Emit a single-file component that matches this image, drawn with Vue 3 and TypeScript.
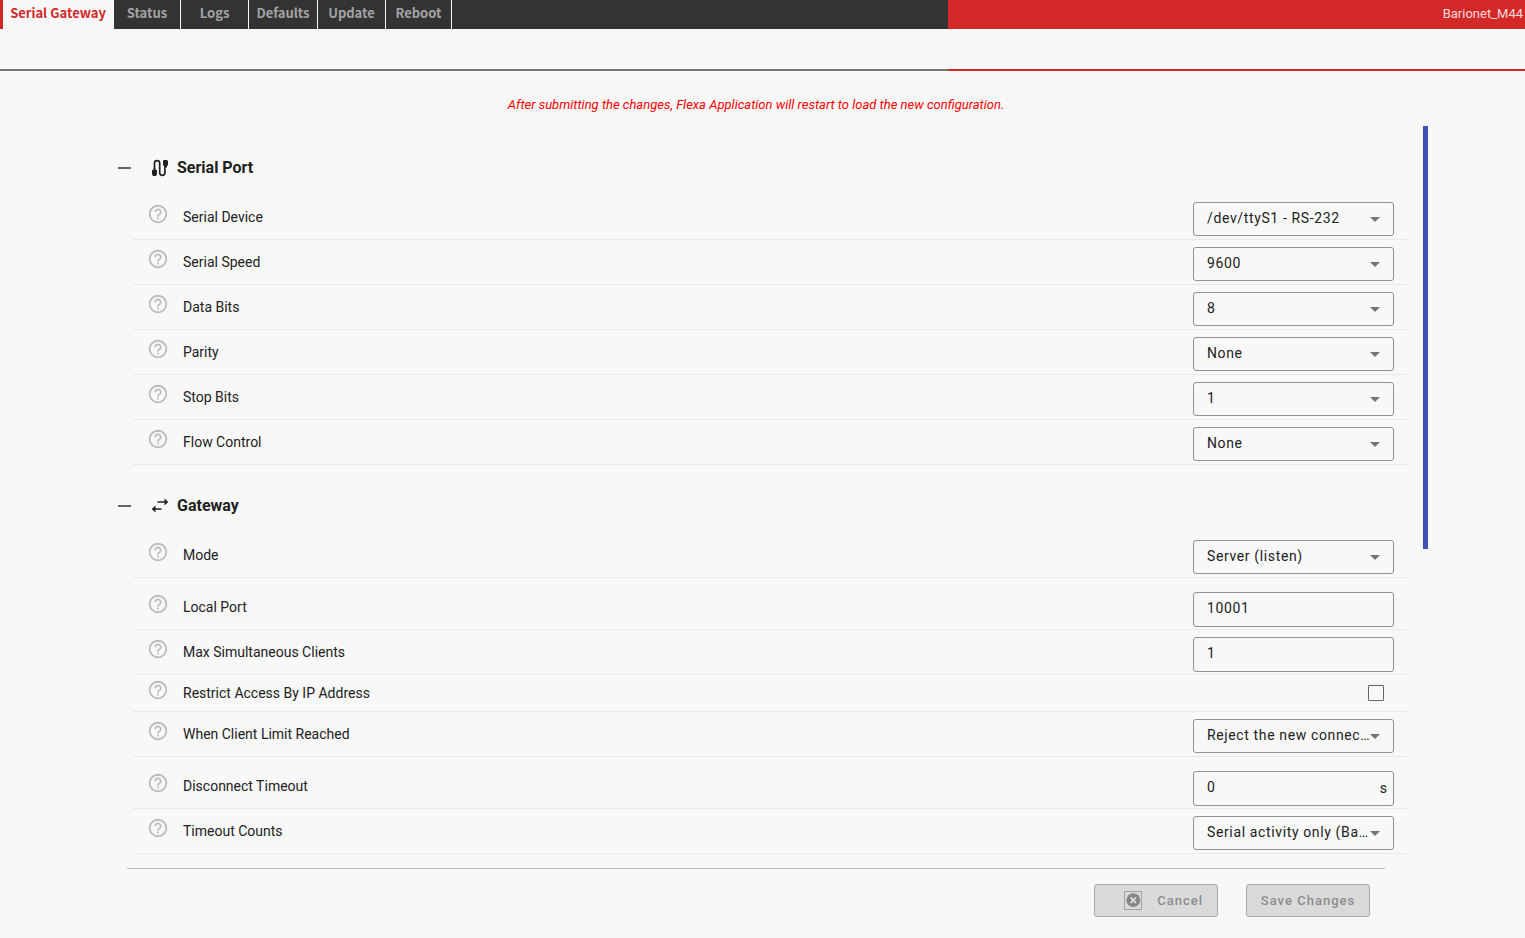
<script setup lang="ts">
import { ref } from 'vue'

type Kind = 'select' | 'text' | 'check'

interface Field {
  id: string
  label: string
  kind: Kind
  value: string
  unit?: string
  spaced?: boolean
}

interface Section {
  id: string
  title: string
  fields: Field[]
}

const tabs: string[] = ['Serial Gateway', 'Status', 'Logs', 'Defaults', 'Update', 'Reboot']
const activeTab = ref('Serial Gateway')

const sections = ref<Section[]>([
  {
    id: 'serial',
    title: 'Serial Port',
    fields: [
      { id: 'device', label: 'Serial Device', kind: 'select', value: '/dev/ttyS1 - RS-232' },
      { id: 'speed', label: 'Serial Speed', kind: 'select', value: '9600' },
      { id: 'data-bits', label: 'Data Bits', kind: 'select', value: '8' },
      { id: 'parity', label: 'Parity', kind: 'select', value: 'None' },
      { id: 'stop-bits', label: 'Stop Bits', kind: 'select', value: '1' },
      { id: 'flow', label: 'Flow Control', kind: 'select', value: 'None' },
    ],
  },
  {
    id: 'gateway',
    title: 'Gateway',
    fields: [
      { id: 'mode', label: 'Mode', kind: 'select', value: 'Server (listen)' },
      { id: 'port', label: 'Local Port', kind: 'text', value: '10001', spaced: true },
      { id: 'clients', label: 'Max Simultaneous Clients', kind: 'text', value: '1' },
      { id: 'restrict', label: 'Restrict Access By IP Address', kind: 'check', value: '' },
      { id: 'limit', label: 'When Client Limit Reached', kind: 'select', value: 'Reject the new connection' },
      { id: 'timeout', label: 'Disconnect Timeout', kind: 'text', value: '0', unit: 's', spaced: true },
      { id: 'counts', label: 'Timeout Counts', kind: 'select', value: 'Serial activity only (Barionet)' },
    ],
  },
])
</script>

<template>
  <div class="page">
    <header class="top">
      <nav class="tabs">
        <a
          v-for="tab in tabs"
          :key="tab"
          href="#"
          class="tab"
          :class="{ active: tab === activeTab }"
          @click.prevent="activeTab = tab"
        >{{ tab }}</a>
      </nav>
      <div class="device">Barionet_M44</div>
    </header>
    <div class="subbar">
      <div class="sub-left"></div>
      <div class="sub-right"></div>
    </div>

    <main class="main">
      <p class="notice">After submitting the changes, Flexa Application will restart to load the new configuration.</p>

      <div class="scroller">
        <form class="form" @submit.prevent>
          <section v-for="section in sections" :key="section.id">
            <div class="heading">
              <button type="button" class="collapse" :aria-label="'Collapse ' + section.title">
                <svg width="13" height="2" viewBox="0 0 13 2"><path d="M0 1h13" stroke="#666" stroke-width="2" /></svg>
              </button>
              <svg v-if="section.id === 'serial'" class="heading-icon" width="18" height="18" viewBox="0 0 18 18">
                <path d="M3.500 12V4.200a2.600 2.600 0 0 1 5.200 0v9.600a2.600 2.600 0 0 0 5.200 0V6" fill="none" stroke="#212121" stroke-width="1.700" />
                <path d="M2.500 9.500h2V11H6v4l-1 2H2l-1-2v-4h1.500zM12.500 1h3.500l1 1v4l-1 1v1.500h-3V7l-1-1V2z" fill="#212121" />
              </svg>
              <svg v-else class="heading-icon" width="18" height="18" viewBox="0 0 18 18">
                <path d="M6.500 5h8M3.500 12h7" fill="none" stroke="#212121" stroke-width="1.700" />
                <path d="M13.500 1.500L17.300 5l-3.800 3.500zM4.500 8.500v7L.700 12z" fill="#212121" />
              </svg>
              <h2 class="title">{{ section.title }}</h2>
            </div>

            <div
              v-for="field in section.fields"
              :key="field.id"
              class="row"
              :class="{ spaced: field.spaced, compact: field.kind === 'check' }"
            >
              <button type="button" class="help" :aria-label="'Help: ' + field.label">
                <svg width="22" height="22" viewBox="0 0 24 24">
                  <path fill="#bdbdbd" d="M11 18h2v-2h-2v2zm1-16C6.480 2 2 6.480 2 12s4.480 10 10 10 10-4.480 10-10S17.520 2 12 2zm0 18c-4.410 0-8-3.590-8-8s3.590-8 8-8 8 3.590 8 8-3.590 8-8 8zm0-14c-2.210 0-4 1.790-4 4h2c0-1.100.900-2 2-2s2 .900 2 2c0 2-3 1.750-3 5h2c0-2.250 3-2.500 3-5 0-2.210-1.790-4-4-4z" />
                </svg>
              </button>
              <label class="label" :for="field.id">{{ field.label }}</label>
              <div v-if="field.kind === 'select'" class="control">
                <select :id="field.id" v-model="field.value" class="box select">
                  <option>{{ field.value }}</option>
                </select>
                <svg class="arrow" width="10" height="5" viewBox="0 0 10 5"><path d="M0 0h10L5 5z" fill="#757575" /></svg>
              </div>
              <div v-else-if="field.kind === 'text'" class="control">
                <input :id="field.id" v-model="field.value" type="text" class="box" />
                <span v-if="field.unit" class="unit">{{ field.unit }}</span>
              </div>
              <input v-else :id="field.id" type="checkbox" class="check" />
            </div>
          </section>
        </form>
        <div class="thumb"></div>
      </div>

      <footer class="footer">
        <button type="button" class="action cancel" disabled>
          <svg class="cancel-icon" width="18" height="19" viewBox="0 0 18 19">
            <rect x=".5" y=".5" width="17" height="18" fill="none" stroke="#a3a3a3" />
            <circle cx="9.300" cy="9.200" r="6.900" fill="#868686" />
            <path d="M6.500 6.400l5.600 5.600M12.100 6.400L6.500 12" stroke="#dadada" stroke-width="1.800" />
          </svg>
          <span>Cancel</span>
        </button>
        <button type="submit" class="action" disabled>Save Changes</button>
      </footer>
    </main>
  </div>
</template>

<style>
html,
body {
  margin: 0;
  background: #f8f8f8;
}
</style>

<style scoped>
.page {
  min-height: 100vh;
  box-sizing: border-box;
  background: #f8f8f8;
  color: #212121;
  font-family: Roboto, sans-serif;
  font-size: 14px;
}

.top,
.subbar {
  display: grid;
  grid-template-columns: 23fr 14fr;
}

.top {
  height: 29px;
}

.tabs {
  display: grid;
  grid-template-columns: 114px 67px 68px 69px 68px 66px;
  background: #333;
}

.tab {
  box-sizing: border-box;
  border-right: 1px solid #f8f8f8;
  color: #a3a3a3;
  font-family: "Noto Sans CJK SC", "Open Sans", sans-serif;
  font-size: 13px;
  font-weight: 700;
  line-height: 26px;
  text-align: center;
  text-decoration: none;
  white-space: nowrap;
}

.tab.active {
  border-left: 3px solid #d32828;
  background: #f8f8f8;
  color: #d32828;
}

.device {
  padding-right: 2px;
  background: #d32828;
  color: #fbdcdc;
  font-size: 13px;
  line-height: 28px;
  text-align: right;
}

.subbar {
  height: 42px;
}

.sub-left {
  border-bottom: 2px solid #757575;
}

.sub-right {
  border-bottom: 2px solid #d32828;
}

.main {
  padding: 0 97px;
}

.notice {
  margin: 0;
  padding: 24px 13px 12px 0;
  color: #f00;
  font-size: 13px;
  font-style: italic;
  line-height: 19px;
  text-align: center;
}

.scroller {
  display: flex;
}

.form {
  flex: 1;
  min-width: 0;
  padding: 1px 15px 0 0;
}

.thumb {
  width: 5px;
  height: 423px;
  background: #3f51b5;
}

.heading {
  display: flex;
  align-items: center;
  height: 54px;
  padding: 14px 0 0 21px;
}

.collapse,
.help {
  display: flex;
  padding: 0;
  border: 0;
  background: none;
}

.heading-icon {
  margin: 0 8px 0 20px;
}

.title {
  margin: 0;
  font-size: 16px;
  font-weight: 700;
  line-height: 20px;
}

.row {
  display: flex;
  align-items: flex-start;
  margin-left: 36px;
  padding: 7px 14px 2px 14px;
  border-bottom: 1px solid #e8e8e8;
}

.row.spaced {
  padding-top: 14px;
}

.row.compact {
  padding-top: 3px;
  padding-bottom: 0;
}

.help {
  margin: 1px 14px 0 0;
}

.label {
  flex: 1;
  padding-top: 6px;
  line-height: 18px;
}

.compact .label {
  padding-bottom: 9px;
}

.control {
  position: relative;
  width: 201px;
}

.box {
  display: block;
  box-sizing: border-box;
  width: 100%;
  height: 35px;
  margin: 0;
  padding: 0 13px 3px;
  border: 1px solid #919191;
  border-radius: 3px;
  background: transparent;
  color: #212121;
  font-family: Roboto, sans-serif;
  font-size: 14px;
  letter-spacing: 0.045em;
  outline: 0;
}

.select {
  appearance: none;
  height: 34px;
  margin-bottom: 1px;
  padding-right: 23px;
  overflow: hidden;
  text-overflow: ellipsis;
  white-space: nowrap;
}

.arrow {
  position: absolute;
  top: 15px;
  right: 14px;
  pointer-events: none;
}

.unit {
  position: absolute;
  top: 8px;
  right: 7px;
  line-height: 18px;
}

.check {
  appearance: none;
  box-sizing: border-box;
  width: 16px;
  height: 16px;
  margin: 7px 10px 0 0;
  border: 1px solid #666;
  border-radius: 1px;
}

.footer {
  display: flex;
  justify-content: flex-end;
  gap: 28px;
  margin: 14px 43px 0 30px;
  padding: 15px 15px 0 0;
  border-top: 1px solid #bdbdbd;
}

.action {
  display: flex;
  align-items: center;
  justify-content: center;
  box-sizing: border-box;
  width: 124px;
  height: 33px;
  padding: 0;
  border: 1px solid #a8a8a8;
  border-radius: 3px;
  background: #dadada;
  color: #8c8c8c;
  font-family: Roboto, sans-serif;
  font-size: 13px;
  font-weight: 500;
  letter-spacing: 1px;
}

.cancel {
  justify-content: flex-end;
  gap: 15px;
  padding-right: 14px;
}
</style>
